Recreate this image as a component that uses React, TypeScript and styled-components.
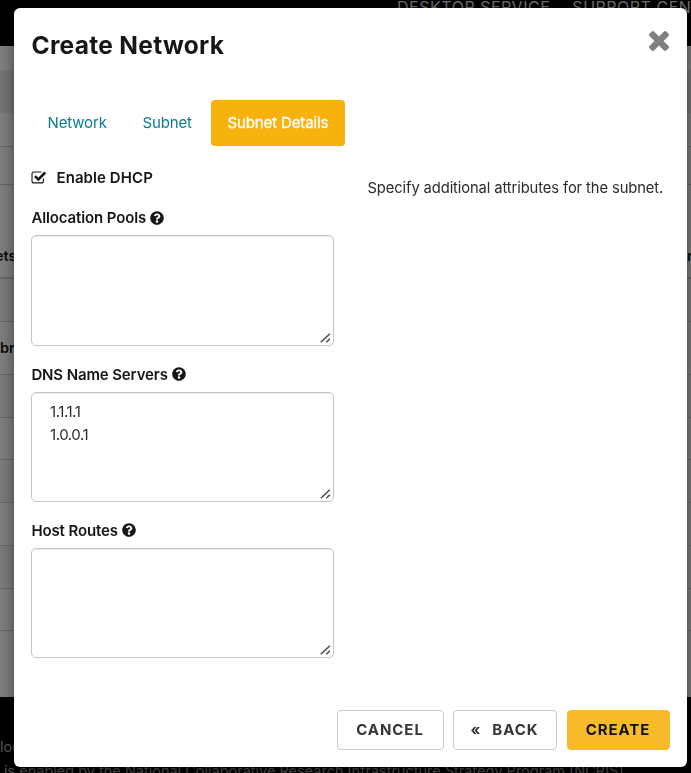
import React from 'react';
import styled, { createGlobalStyle, css } from 'styled-components';
import { FaQuestionCircle } from 'react-icons/fa';

const GlobalStyle = createGlobalStyle`
  *, *::before, *::after { box-sizing: border-box; }
  html, body { margin: 0; height: 100%; overflow: hidden; }
  body {
    font-family: Inter, "Liberation Sans", sans-serif;
    font-size: 15px;
    line-height: 23px;
    color: #161616;
    background: #fff;
  }
`;

/* ---------- Page behind the dialog ---------- */

const Page = styled.div`
  height: 100vh;
  display: flex;
  flex-direction: column;
  overflow: hidden;
`;

const SiteHeader = styled.header`
  height: 46px;
  flex: none;
  display: flex;
  gap: 22px;
  padding-left: 397px;
  background: #000;
  color: #ddd;
  white-space: nowrap;
  overflow: hidden;
  font-size: 16px;
  line-height: 15px;
  letter-spacing: 0.52px;
`;

const Main = styled.main`
  height: 651px;
  flex: none;
  padding-top: 24px;
  overflow: hidden;
`;

const Crumbs = styled.div`
  height: 43px;
  background: #ececec;
`;

const Actions = styled.div`
  height: 33px;
`;

const Toolbar = styled.div`
  height: 39px;
  border-top: 1px solid #ccc;
  border-bottom: 1px solid #ccc;
`;

const TableRow = styled.div<{ $height: number; $striped?: boolean; $thick?: boolean }>`
  height: ${p => p.$height}px;
  display: flex;
  align-items: flex-end;
  justify-content: space-between;
  background: ${p => (p.$striped ? '#f9f9f9' : 'transparent')};
  border-bottom: ${p => (p.$thick ? 2 : 1)}px solid #d0d0d0;
  font-weight: 600;
  font-size: 14.5px;
  white-space: nowrap;
`;

const CellText = styled.span<{ $shift: number; $lift: number }>`
  padding-bottom: ${p => p.$lift}px;
  margin-left: ${p => p.$shift}px;
`;

const EndText = styled.span`
  width: 4px;
  padding-bottom: 10px;
  overflow: hidden;
`;

const SiteFooter = styled.footer`
  flex: 1;
  padding-top: 38px;
  background: #000;
  color: #aaa;
  white-space: nowrap;
  overflow: hidden;
  font-size: 14.5px;
  line-height: 24px;
`;

const FooterLine = styled.div<{ $indent: number }>`
  padding-left: ${p => p.$indent}px;
`;

/* ---------- Dialog ---------- */

const Backdrop = styled.div`
  position: fixed;
  inset: 0;
  padding: 8px 4px 6px 14px;
  display: flex;
  background: rgba(0, 0, 0, 0.5);
`;

const Dialog = styled.section`
  flex: 1;
  display: flex;
  flex-direction: column;
  padding: 0 17px;
  background: #fff;
  border-radius: 6px;
  box-shadow: 0 5px 15px rgba(0, 0, 0, 0.5);
`;

const DialogHeader = styled.header`
  height: 92px;
  display: flex;
  justify-content: space-between;
  padding-top: 21px;
`;

const Title = styled.h2`
  margin: 0 0 0 0.5px;
  font-size: 24.5px;
  line-height: 32px;
  font-weight: 650;
  letter-spacing: 0.3px;
`;

const CloseButton = styled.button`
  width: 20px;
  height: 20px;
  margin: 2px 1px 0 0;
  padding: 0;
  border: 0;
  background: none;
  color: #808080;
  svg { display: block; }
`;

const Tabs = styled.nav`
  display: flex;
  height: 46px;
`;

const Tab = styled.a<{ $width: number; $active?: boolean }>`
  width: ${p => p.$width}px;
  padding-left: 16.5px;
  border-radius: 4px;
  line-height: 46px;
  letter-spacing: -0.15px;
  color: #0b7c93;
  ${p => p.$active && css`
    background: #f8b20e;
    color: #fff;
    letter-spacing: -0.13px;
    -webkit-text-stroke: 0.3px #fff;
  `}
`;

const Body = styled.div`
  display: flex;
  flex: 1;
  padding-top: 20px;
`;

const Form = styled.form`
  width: 303px;
`;

const Help = styled.p`
  margin: 11px 0 0 33.5px;
  font-size: 14.75px;
  letter-spacing: -0.11px;
  white-space: nowrap;
  color: #2b2b2b;
`;

const CheckLabel = styled.label`
  display: flex;
  align-items: center;
  gap: 9.5px;
  height: 23px;
  margin-bottom: 17.25px;
  font-weight: 600;
  letter-spacing: 0.08px;
`;

const Field = styled.div`
  height: 156.35px;
`;

const FieldLabel = styled.label`
  display: flex;
  align-items: center;
  gap: 4px;
  height: 23px;
  margin-bottom: 6px;
  padding-left: 0.4px;
  font-weight: 600;
  letter-spacing: -0.12px;
`;

const AreaFrame = styled.div`
  position: relative;
  height: 110.3px;
`;

const Area = styled.textarea`
  display: block;
  width: 100%;
  height: 100%;
  padding: 7px 18px;
  border: 1px solid #c6c6c6;
  border-radius: 5px;
  outline: 0;
  resize: none;
  overflow: hidden;
  box-shadow: inset 0 1px 1px rgba(0, 0, 0, 0.08);
  background: #fff;
  color: #2b2b2b;
  font: inherit;
  letter-spacing: -0.45px;
`;

const Grip = styled.svg`
  position: absolute;
  right: 3px;
  bottom: 3px;
`;

const Buttons = styled.footer`
  display: flex;
  height: 57px;
  justify-content: flex-end;
`;

const Button = styled.button<{ $width: number; $gap: number; $primary?: boolean }>`
  width: ${p => p.$width}px;
  height: 40px;
  margin-right: ${p => p.$gap}px;
  padding: 0 1px 1px 0;
  display: flex;
  align-items: center;
  justify-content: center;
  gap: 11px;
  border: 1px solid ${p => (p.$primary ? '#f9ba2a' : '#c8c8c8')};
  border-radius: 4px;
  background: ${p => (p.$primary ? '#f9ba2a' : '#fff')};
  color: ${p => (p.$primary ? '#111' : '#363636')};
  font: 650 15px/23px Inter, "Liberation Sans", sans-serif;
  letter-spacing: 0.95px;
`;

const TimesIcon = () => (
  <svg width="20" height="20" viewBox="110 366 1188 1188" fill="currentColor">
    <path d="M1298 1322q0 40-28 68l-136 136q-28 28-68 28t-68-28l-294-294-294 294q-28 28-68 28t-68-28l-136-136q-28-28-28-68t28-68l294-294-294-294q-28-28-28-68t28-68l136-136q28-28 68-28t68 28l294 294 294-294q28-28 68-28t68 28l136 136q28 28 28 68t-28 68l-294 294 294 294q28 28 28 68z" />
  </svg>
);

const CheckIcon = () => (
  <svg width="16" height="14" viewBox="0 0 16 14" fill="none" stroke="#161616">
    <path d="M12.4 7.5v2.4a2 2 0 0 1-2 2H3a2 2 0 0 1-2-2V3a2 2 0 0 1 2-2h7.5" strokeWidth="1.1" />
    <path d="M4 5.2 7.3 8.5l7-7" strokeWidth="2.5" />
  </svg>
);

const fields = [
  { label: 'Allocation Pools', value: '' },
  { label: 'DNS Name Servers', value: '1.1.1.1\n1.0.0.1' },
  { label: 'Host Routes', value: '' },
];

const plainRows = [43, 42, 43, 43, 43, 42];

export default function App() {
  return (
    <>
      <GlobalStyle />
      <Page>
        <SiteHeader>
          <span>DESKTOP SERVICE</span>
          <span>SUPPORT CEN</span>
        </SiteHeader>
        <Main>
          <Crumbs />
          <Actions />
          <Toolbar />
          <TableRow $height={94} $thick>
            <CellText $shift={-5} $lift={10}>ets</CellText>
            <EndText>r</EndText>
          </TableRow>
          <TableRow $height={43} $striped />
          <TableRow $height={53}>
            <CellText $shift={0} $lift={15}>br</CellText>
          </TableRow>
          {plainRows.map((height, i) => (
            <TableRow key={i} $height={height} $striped={i % 2 === 0} />
          ))}
        </Main>
        <SiteFooter>
          <FooterLine $indent={0}>lou</FooterLine>
          <FooterLine $indent={4}>
            is enabled by the National Collaborative Research Infrastructure Strategy Program (NCRIS)
          </FooterLine>
        </SiteFooter>
      </Page>
      <Backdrop>
        <Dialog role="dialog">
          <DialogHeader>
            <Title>Create Network</Title>
            <CloseButton aria-label="Close"><TimesIcon /></CloseButton>
          </DialogHeader>
          <Tabs>
            <Tab $width={95}>Network</Tab>
            <Tab $width={85}>Subnet</Tab>
            <Tab $width={134} $active>Subnet Details</Tab>
          </Tabs>
          <Body>
            <Form>
              <CheckLabel><CheckIcon />Enable DHCP</CheckLabel>
              {fields.map(field => (
                <Field key={field.label}>
                  <FieldLabel>
                    {field.label}
                    <FaQuestionCircle size={14} />
                  </FieldLabel>
                  <AreaFrame>
                    <Area defaultValue={field.value} spellCheck={false} />
                    <Grip width="11" height="10" viewBox="0 0 11 10" stroke="#4a4a4a" strokeWidth="1.5">
                      <path d="M.8 9.2 9.8.8M6.3 9.2l3.6-3.4" />
                    </Grip>
                  </AreaFrame>
                </Field>
              ))}
            </Form>
            <Help>Specify additional attributes for the subnet.</Help>
          </Body>
          <Buttons>
            <Button $width={107} $gap={9}>CANCEL</Button>
            <Button $width={104} $gap={10}><span>«</span>BACK</Button>
            <Button $width={103} $gap={0} $primary>CREATE</Button>
          </Buttons>
        </Dialog>
      </Backdrop>
    </>
  );
}
